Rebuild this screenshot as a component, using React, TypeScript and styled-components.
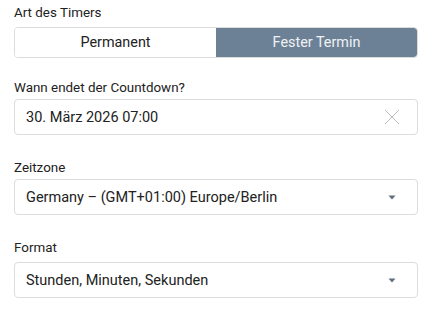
import React from "react";
import styled, { createGlobalStyle } from "styled-components";

const Global = createGlobalStyle`
  html, body { margin: 0; padding: 0; background: #fff; }
  body { font-family: Roboto, "Liberation Sans", Arial, sans-serif; color: #222; }
`;

const Form = styled.div`
  width: 404px;
  margin-left: 14px;
  padding-top: 5px;
  display: flex;
  flex-direction: column;
`;

const Field = styled.div<{ $gapTop: number }>`
  display: flex;
  flex-direction: column;
  margin-top: ${(p) => p.$gapTop}px;
`;

const Label = styled.div<{ $mb: number }>`
  font-size: 13.4px;
  line-height: 15px;
  color: #222;
  margin-bottom: ${(p) => p.$mb}px;
`;

const Segmented = styled.div`
  display: grid;
  grid-template-columns: 1fr 1fr;
  height: 31px;
  border: 1px solid #dcdcdc;
  border-radius: 4px;
  box-sizing: border-box;
  overflow: hidden;
`;

const Segment = styled.div<{ $active?: boolean }>`
  display: flex;
  align-items: center;
  justify-content: center;
  font-size: 14.4px;
  background: ${(p) => (p.$active ? "#6d8196" : "#fff")};
  color: ${(p) => (p.$active ? "#eef2f5" : "#222")};
  border-radius: ${(p) => (p.$active ? "0 3px 3px 0" : "0")};
`;

const Box = styled.div`
  height: 36px;
  box-sizing: border-box;
  border: 1px solid #dcdcdc;
  border-radius: 4px;
  display: flex;
  align-items: center;
  padding: 0 17px 0 11px;
  font-size: 14.5px;
  color: #222;
`;

const Value = styled.span`
  flex: 1;
  white-space: nowrap;
`;

const IconSlot = styled.span`
  display: flex;
  align-items: center;
  justify-content: center;
  width: 16px;
  height: 16px;
`;

const Clear = () => (
  <svg width="16" height="16" viewBox="0 0 16 16">
    <path d="M1 1 L15 15 M15 1 L1 15" stroke="#bdbdbd" strokeWidth="1" fill="none" />
  </svg>
);

const Caret = () => (
  <svg width="8" height="5" viewBox="0 0 8 5">
    <path d="M0.5 0.5 H7.5 L4 4.5 Z" fill="#5f6d7c" />
  </svg>
);

export default function App() {
  return (
    <>
      <Global />
      <Form>
        <Field $gapTop={0}>
          <Label $mb={7}>Art des Timers</Label>
          <Segmented>
            <Segment>Permanent</Segment>
            <Segment $active>Fester Termin</Segment>
          </Segmented>
        </Field>
        <Field $gapTop={22}>
          <Label $mb={4}>Wann endet der Countdown?</Label>
          <Box>
            <Value>30. März 2026 07:00</Value>
            <IconSlot>
              <Clear />
            </IconSlot>
          </Box>
        </Field>
        <Field $gapTop={25}>
          <Label $mb={4}>Zeitzone</Label>
          <Box>
            <Value>Germany – (GMT+01:00) Europe/Berlin</Value>
            <IconSlot>
              <Caret />
            </IconSlot>
          </Box>
        </Field>
        <Field $gapTop={25}>
          <Label $mb={7}>Format</Label>
          <Box>
            <Value>Stunden, Minuten, Sekunden</Value>
            <IconSlot>
              <Caret />
            </IconSlot>
          </Box>
        </Field>
      </Form>
    </>
  );
}
